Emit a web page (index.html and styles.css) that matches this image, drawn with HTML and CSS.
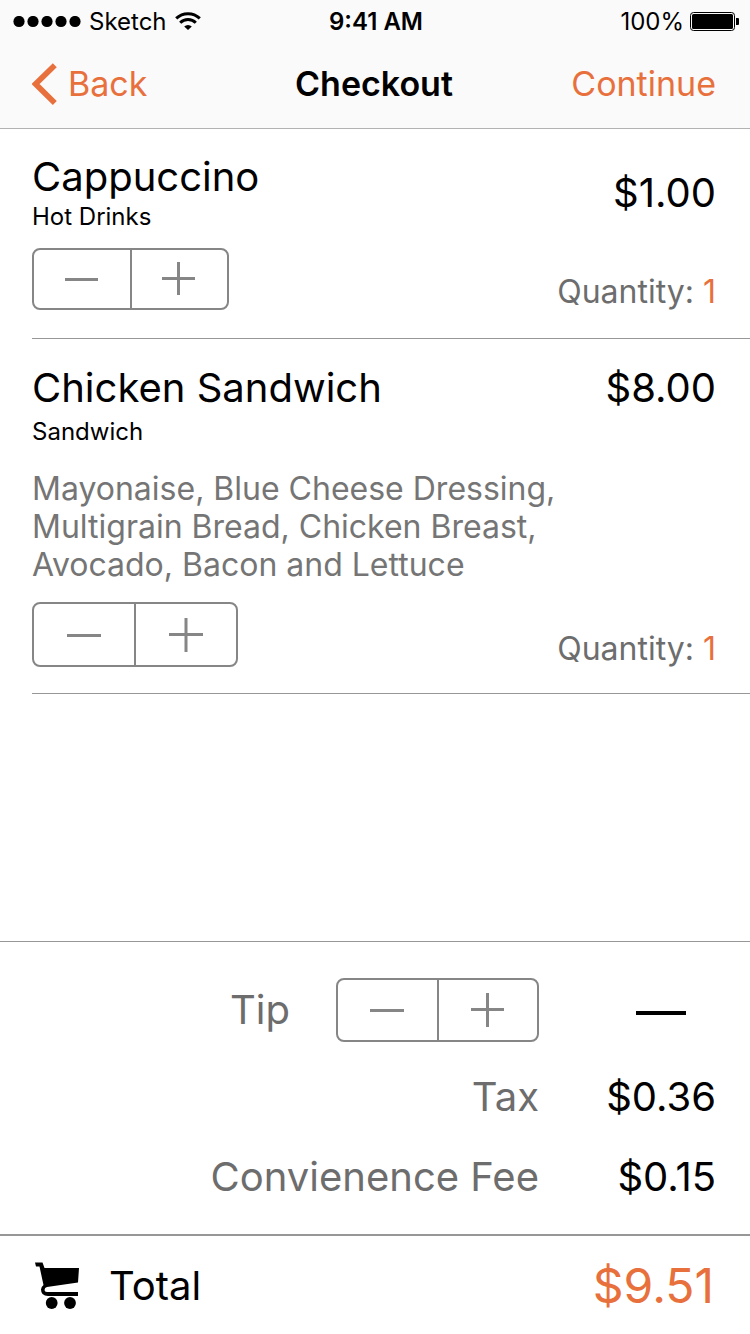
FILE: index.html
```html
<!DOCTYPE html>
<html lang="en">
<head>
<meta charset="utf-8">
<meta name="viewport" content="width=device-width, initial-scale=1">
<title>Checkout</title>
<link rel="stylesheet" href="styles.css">
</head>
<body>
<div class="screen">
  <header class="header">
    <div class="status">
      <div class="status-left">
        <svg class="signal" width="68" height="12" viewBox="0 0 68 12" aria-hidden="true"><circle cx="6" cy="5.5" r="5.6"/><circle cx="20" cy="5.5" r="5.6"/><circle cx="34" cy="5.5" r="5.6"/><circle cx="48" cy="5.5" r="5.6"/><circle cx="62" cy="5.5" r="5.6"/></svg>
        <span>Sketch</span>
        <svg class="wifi" width="26" height="20" viewBox="0 0 26 20" aria-hidden="true"><path d="M1.2 6.4a17 17 0 0 1 23.6 0M5.2 10.8a11 11 0 0 1 15.6 0" fill="none" stroke="#000" stroke-width="3"/><path d="M13 18 9.2 14.4a5.5 5.5 0 0 1 7.6 0z"/></svg>
      </div>
      <span class="time">9:41 AM</span>
      <div class="status-right">
        <span>100%</span>
        <svg class="battery" width="49" height="21" viewBox="0 0 49 21" aria-hidden="true"><rect x=".5" y=".5" width="44" height="18" rx="3" fill="none" stroke="#000"/><rect x="2" y="2" width="41" height="15" rx="1.5"/><path d="M46 6h2q1 0 1 1v5q0 1-1 1h-2z"/></svg>
      </div>
    </div>
    <nav class="nav">
      <button class="nav-button" type="button"><svg width="26" height="42" viewBox="0 0 26 42" aria-hidden="true"><path d="M22.8 2.2 3.6 21l19.2 19" fill="none" stroke="currentColor" stroke-width="5.6"/></svg>Back</button>
      <h1 class="title">Checkout</h1>
      <button class="nav-button nav-next" type="button">Continue</button>
    </nav>
  </header>

  <main class="items">
    <article class="item">
      <div class="details">
        <h2 class="name">Cappuccino</h2>
        <p class="category">Hot Drinks</p>
        <div class="stepper stepper-small" role="group" aria-label="Cappuccino quantity">
          <button type="button" aria-label="Remove one"><svg width="34" height="34" viewBox="0 0 34 34"><path d="M0 17.5h33"/></svg></button>
          <button type="button" aria-label="Add one"><svg width="34" height="34" viewBox="0 0 34 34"><path d="M0 16.5h33M16.5 0v33"/></svg></button>
        </div>
      </div>
      <div class="figures figures-low">
        <p class="price">$1.00</p>
        <p class="quantity">Quantity: <span class="accent">1</span></p>
      </div>
    </article>
    <article class="item item-tall">
      <div class="details">
        <h2 class="name">Chicken Sandwich</h2>
        <p class="category category-spaced">Sandwich</p>
        <p class="extras">Mayonaise, Blue Cheese Dressing, Multigrain Bread, Chicken Breast, Avocado, Bacon and Lettuce</p>
        <div class="stepper stepper-large" role="group" aria-label="Chicken Sandwich quantity">
          <button type="button" aria-label="Remove one"><svg width="34" height="34" viewBox="0 0 34 34"><path d="M0 17.5h34"/></svg></button>
          <button type="button" aria-label="Add one"><svg width="34" height="34" viewBox="0 0 34 34"><path d="M0 16.5h34M17 0v34"/></svg></button>
        </div>
      </div>
      <div class="figures">
        <p class="price">$8.00</p>
        <p class="quantity">Quantity: <span class="accent">1</span></p>
      </div>
    </article>
  </main>

  <section class="summary">
    <div class="line line-tip">
      <span class="label">Tip</span>
      <div class="stepper" role="group" aria-label="Tip">
        <button type="button" aria-label="Decrease tip"><svg width="34" height="34" viewBox="0 0 34 34"><path d="M0 17.5h34"/></svg></button>
        <button type="button" aria-label="Increase tip"><svg width="34" height="34" viewBox="0 0 34 34"><path d="M0 16.5h33M16.5 0v34"/></svg></button>
      </div>
      <span class="amount" role="img" aria-label="No tip"><span class="dash"></span></span>
    </div>
    <div class="line"><span class="label">Tax</span><span class="amount">$0.36</span></div>
    <div class="line"><span class="label">Convienence Fee</span><span class="amount">$0.15</span></div>
  </section>

  <footer class="total">
    <svg class="cart" width="46" height="48" viewBox="0 0 46 48" aria-hidden="true"><path d="M0 .5h7.5L9.5 6H44l-1 14.500L12 25q-2.500.5-2.500 3 0 2 2.500 2h31v4H13q-7 0-7-6.500 0-2.500 2.500-4.500L4.500 4.500H1z"/><circle cx="16.700" cy="41" r="5.900"/><circle cx="35" cy="41" r="5.900"/></svg>
    <span class="total-label">Total</span>
    <span class="total-amount">$9.51</span>
  </footer>
</div>
</body>
</html>
```
FILE: styles.css
```css
* {
  box-sizing: border-box;
}

body,
h1,
h2,
p {
  margin: 0;
  font-weight: 400;
}

body {
  font-family: Inter, "Liberation Sans", sans-serif;
  color: #000;
  background: #fff;
}

svg {
  display: block;
  flex: none;
}

button {
  padding: 0;
  border: 0;
  background: none;
  font: inherit;
  color: inherit;
}

.screen {
  min-height: 100vh;
  display: flex;
  flex-direction: column;
}

.header {
  background: #fafafa;
  border-bottom: 1px solid #b2b2b2;
}

.status {
  display: grid;
  grid-template-columns: 1fr auto 1fr;
  align-items: center;
  height: 42px;
  padding: 2px 11px 0 13px;
  font-size: 24px;
  line-height: 28px;
}

.status-left,
.status-right {
  display: flex;
  align-items: center;
  gap: 8px;
}

.status-right {
  justify-content: flex-end;
  gap: 6px;
}

.time {
  font-weight: 600;
}

.nav {
  display: grid;
  grid-template-columns: 1fr auto 1fr;
  align-items: center;
  height: 86px;
  padding: 0 34px 2px 32px;
  font-size: 34px;
  line-height: 42px;
}

.nav-button {
  display: flex;
  align-items: center;
  gap: 10px;
  color: #e8703c;
}

.nav-next {
  justify-self: end;
}

.title {
  font-size: 34px;
  font-weight: 600;
}

.items {
  flex: 1;
}

.item {
  display: flex;
  justify-content: space-between;
  margin-left: 32px;
  padding: 24px 34px 28px 0;
  border-bottom: 1px solid #979797;
}

.item-tall {
  padding-top: 25px;
  padding-bottom: 26px;
}

.name,
.price {
  font-size: 40px;
  line-height: 48px;
}

.category {
  margin: 2px 0 17px;
  font-size: 24px;
  line-height: 28px;
}

.category-spaced {
  margin: 6px 0 24px;
}

.extras {
  max-width: 540px;
  margin-bottom: 18px;
  font-size: 32px;
  line-height: 38px;
  color: #757575;
}

.figures {
  display: flex;
  flex: none;
  flex-direction: column;
  justify-content: space-between;
  text-align: right;
}

.figures-low {
  padding-top: 16px;
}

.quantity {
  font-size: 32px;
  line-height: 36px;
  color: #6d6d6d;
}

.accent {
  color: #e8703c;
}

.stepper {
  display: flex;
  width: 203px;
  height: 64px;
  border: 2px solid #868686;
  border-radius: 8px;
}

.stepper-small {
  width: 197px;
  height: 62px;
}

.stepper-large {
  width: 206px;
  height: 65px;
}

.stepper button {
  flex: 1;
  display: grid;
  place-items: center;
}

.stepper button + button {
  border-left: 2px solid #868686;
}

.stepper path {
  fill: none;
  stroke: #868686;
  stroke-width: 3;
}

.summary {
  display: flex;
  flex-direction: column;
  gap: 32px;
  padding: 36px 34px 33px 32px;
  border-top: 1px solid #979797;
  font-size: 40px;
  line-height: 48px;
}

.line {
  display: flex;
  justify-content: flex-end;
  align-items: center;
}

.line-tip {
  margin-bottom: -1px;
}

.label {
  color: #6d6d6d;
}

.line-tip .label {
  margin-right: 46px;
}

.amount {
  flex: none;
  width: 177px;
  text-align: right;
}

.dash {
  display: block;
  width: 50px;
  height: 4px;
  margin: 5px 30px 0 auto;
  background: #000;
}

.total {
  display: flex;
  align-items: center;
  padding: 21px 36px 19px 35px;
  border-top: 2px solid #979797;
  font-size: 40px;
  line-height: 58px;
}

.total-label {
  flex: 1;
  margin-left: 28px;
}

.total-amount {
  font-size: 48px;
  color: #e8703c;
}
```
